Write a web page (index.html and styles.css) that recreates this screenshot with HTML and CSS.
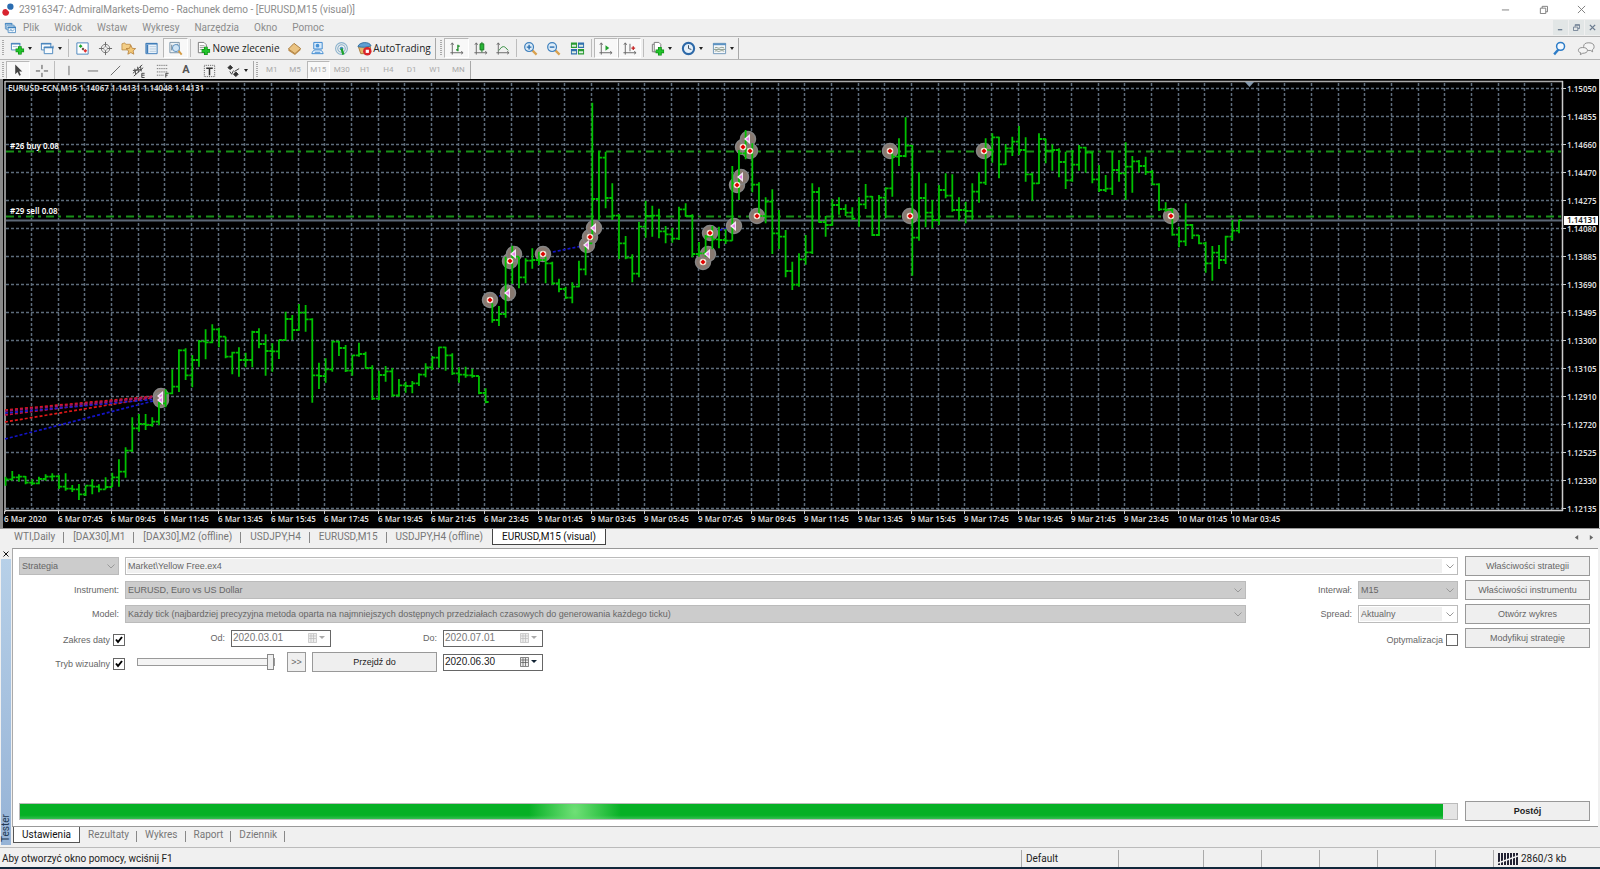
FILE: index.html
```html
<!DOCTYPE html>
<html lang="pl">
<head>
<meta charset="utf-8">
<title>AdmiralMarkets-Demo - EURUSD,M15</title>
<link rel="stylesheet" href="styles.css">
</head>
<body>
<div class="app">
  <header class="title-bar">
    <svg class="app-icon" viewBox="0 0 14 14"><circle cx="9" cy="4" r="3.4" fill="#2a6cb0"/><circle cx="4" cy="10" r="3.6" fill="#d8242f"/><path d="M5 6l3 3" stroke="#fff" stroke-width="1.2"/></svg>
    <span class="title-text">23916347: AdmiralMarkets-Demo - Rachunek demo - [EURUSD,M15 (visual)]</span>
    <div class="window-buttons">
      <button aria-label="Minimalizuj"><svg viewBox="0 0 10 10"><path d="M1 5.5h8"/></svg></button>
      <button aria-label="Przywróć"><svg viewBox="0 0 10 10"><path d="M1.5 3.5h6v6h-6zM3.5 3.5v-2h6v6h-2"/></svg></button>
      <button aria-label="Zamknij"><svg viewBox="0 0 10 10"><path d="M1 1l8 8M9 1l-8 8"/></svg></button>
    </div>
  </header>

  <nav class="menu-bar">
    <svg class="menu-icon" viewBox="0 0 13 13"><g fill="#f4f9fd" stroke="#5a93c4"><path d="M1.500 1.500h7v6h-7z"/><path d="M3 3.500h8v5h-8z"/><path d="M4.500 5.500h8v6h-8z"/></g><path d="M1 2h8M4 6h9" stroke="#3f83c0" stroke-width="1.500"/><path d="M6 10l1.500-2 1.500 2 2-2" fill="none" stroke="#5a93c4"/></svg>
    <a href="#">Plik</a><a href="#">Widok</a><a href="#">Wstaw</a><a href="#">Wykresy</a><a href="#">Narzędzia</a><a href="#">Okno</a><a href="#">Pomoc</a>
    <div class="mdi-buttons">
      <button aria-label="Minimalizuj wykres"><svg viewBox="0 0 8 8"><path d="M1 6.500h5" stroke-width="1.500"/></svg></button>
      <button aria-label="Przywróć wykres"><svg viewBox="0 0 8 8"><path d="M.5 3.500h5v4h-5zM2.500 3V.700h5v4.500h-2M2.500 1.500h5"/></svg></button>
      <button aria-label="Zamknij wykres"><svg viewBox="0 0 8 8"><path d="M1 1l6 6M7 1l-6 6" stroke-width="1.600"/></svg></button>
    </div>
  </nav>

  <div class="toolbar toolbar-main">
    <span class="grip"></span>
    <div class="group group-files">
      <button class="drop" aria-label="Nowy wykres"><svg viewBox="0 0 16 16"><path d="M1.500 2.500h9v7h-9z" fill="#fff" stroke="#4b86bd"/><path d="M1 3h10" stroke="#4b86bd" stroke-width="1.500"/><path d="M3 6h5" stroke="#9ab8d4"/><path d="M10.500 5.500v9M6 10h9" stroke="#0a8a12" stroke-width="4"/><path d="M10.500 6v8M6.500 10h8" stroke="#22c32b" stroke-width="2.400"/></svg></button>
      <button class="drop" aria-label="Profile"><svg viewBox="0 0 16 16"><g fill="#f6fafd" stroke="#4b86bd"><path d="M1.500 2.500h10v7h-10z"/><path d="M4.500 6.500h9v7h-9z"/></g><path d="M1 3h11M4 7h10" stroke="#4b86bd" stroke-width="1.500"/><path d="M14 5v3" stroke="#4b86bd"/></svg></button>
    </div>
    <span class="separator"></span>
    <div class="group group-five">
      <button aria-label="Rynek"><svg viewBox="0 0 16 16"><path d="M2 2h12v12H2z" fill="#fff" stroke="#4b86bd"/><path d="M4 5.500l2-2 2 2-2 2z" fill="#19a628"/><path d="M7 8.500l1.500-1.500L10 8.500 8.500 10z" fill="#5c3a2a"/><path d="M9 10.500l2-2 2 2-2 2z" fill="#e03030"/></svg></button>
      <button aria-label="Okno danych"><svg viewBox="0 0 16 16"><circle cx="8" cy="8" r="4.500" fill="none" stroke="#777"/><circle cx="8" cy="8" r="2" fill="none" stroke="#aaa"/><path d="M8 1v5M8 10v5M1 8h5M10 8h5" stroke="#666"/></svg></button>
      <button aria-label="Nawigator"><svg viewBox="0 0 16 16"><path d="M1 3l3-1 1 1.500h5v6H1z" fill="#f3ce87" stroke="#b8863e" stroke-width=".8"/><path d="M10.500 4.500l1.500 3.300 3.600.3-2.700 2.400.8 3.600-3.200-1.800-3.200 1.800.8-3.600L5.400 8.100 9 7.800z" fill="#f3c877" stroke="#b07a34" stroke-width=".8"/></svg></button>
      <button aria-label="Terminal"><svg viewBox="0 0 16 16"><path d="M2 2.500h12v11H2z" fill="#eaf3fb" stroke="#3d7bb7"/><path d="M2 3h12" stroke="#3d7bb7" stroke-width="1.500"/><path d="M3.500 4v9" stroke="#3d7bb7" stroke-width="2"/><path d="M6 6h7M6 8.500h7M6 11h7" stroke="#b6cbdd"/></svg></button>
      <button class="pressed" aria-label="Tester strategii"><svg viewBox="0 0 16 16"><path d="M2 1.500h10v11H2z" fill="#eef3f7" stroke="#7b93a8"/><path d="M4 4v6M6 5v4M10 3v3" stroke="#678"/><circle cx="8.500" cy="7.500" r="3.800" fill="#cfe4f5" stroke="#5b8fbe"/><path d="M11.300 10.500l3.300 4" stroke="#d59b42" stroke-width="2"/></svg></button>
    </div>
    <span class="separator"></span>
    <button class="text-button new-order"><svg viewBox="0 0 16 16"><path d="M2.500 1.500h6l2.500 2.500v8.500H2.500z" fill="#fff" stroke="#777"/><path d="M4 5h5M4 7h5M4 9h3" stroke="#999"/><path d="M10.500 6v9M6 10.500h9" stroke="#0a8a12" stroke-width="4"/><path d="M10.500 6.500v8M6.500 10.500h8" stroke="#22c32b" stroke-width="2.400"/></svg>Nowe zlecenie</button>
    <div class="group group-three">
      <button aria-label="MetaEditor"><svg viewBox="0 0 16 16"><path d="M1.500 8.500l6-6 7 5.500-6 5.500z" fill="#eac382" stroke="#a87a3b"/><path d="M1.500 8.500v2l7 4.500 6-5.500V8l-6 5.500z" fill="#bd8d4a"/></svg></button>
      <button aria-label="MQL5"><svg viewBox="0 0 16 16"><path d="M4 1.500h9v7H4z" fill="#d8eafa" stroke="#3a86cf"/><circle cx="8" cy="5" r="2" fill="#4792d6"/><path d="M2 13.500c1-4 3-4 6-4s5 0 6 4z" fill="#eaf4fd" stroke="#3a86cf"/><path d="M5 12h6" stroke="#3a86cf"/></svg></button>
      <button aria-label="Sygnały"><svg viewBox="0 0 16 16"><g fill="none" stroke="#8bb2cc" stroke-width="1.200"><circle cx="8" cy="8" r="6.300"/><circle cx="8" cy="8" r="4"/></g><circle cx="8" cy="8" r="2" fill="#4c91c2"/><path d="M8 8l2 6.500" stroke="#1da32a" stroke-width="2.400"/></svg></button>
    </div>
    <button class="text-button auto-trading"><svg viewBox="0 0 16 16"><path d="M1.500 6l6.500-2 6.500 2-1.500 7.500H4z" fill="#e5b56a" stroke="#a87a3b"/><path d="M1 6c1-5 12-6 14-1-4 2-9 2-14 1z" fill="#5e9fd4" stroke="#38709f"/><circle cx="11" cy="11" r="4.500" fill="#d9232a"/><path d="M9.300 9.300h3.400v3.400H9.300z" fill="#fff"/></svg>AutoTrading</button>
    <span class="edge"></span>
    <span class="grip"></span>
    <div class="group group-three">
      <button class="pressed" aria-label="Wykres słupkowy"><svg viewBox="0 0 16 16"><path d="M3.500 2v12.500M1.500 12.500h13M2 4l1.500-2L5 4M13 11l2 1.500-2 1.500" fill="none" stroke="#666"/><path d="M9.500 4v7M7.500 9.500h2M9.500 5.500h2" stroke="#1a8a25" stroke-width="1.400"/></svg></button>
      <button aria-label="Wykres świecowy"><svg viewBox="0 0 16 16"><path d="M3.500 2v12.500M1.500 12.500h13M2 4l1.500-2L5 4M13 11l2 1.500-2 1.500" fill="none" stroke="#666"/><path d="M9.500 1v11" stroke="#1a7a25"/><path d="M7.500 3h4v6.500h-4z" fill="#27b535" stroke="#147a1e"/></svg></button>
      <button aria-label="Wykres liniowy"><svg viewBox="0 0 16 16"><path d="M3.500 2v12.500M1.500 12.500h13M2 4l1.500-2L5 4M13 11l2 1.500-2 1.500" fill="none" stroke="#666"/><path d="M4 10c2-1 2-4 5-4 2 0 3 2 5 4" fill="none" stroke="#2d8a38"/></svg></button>
    </div>
    <span class="separator"></span>
    <div class="group group-three">
      <button aria-label="Powiększ"><svg viewBox="0 0 16 16"><path d="M10 10l4.500 4.500" stroke="#d9a14f" stroke-width="2.400"/><circle cx="6.500" cy="6.500" r="4.700" fill="#ddecf8" stroke="#3f80bd" stroke-width="1.300"/><path d="M4 6.500h5M6.500 4v5" stroke="#2b6fb0" stroke-width="1.500"/></svg></button>
      <button aria-label="Pomniejsz"><svg viewBox="0 0 16 16"><path d="M10 10l4.500 4.500" stroke="#d9a14f" stroke-width="2.400"/><circle cx="6.500" cy="6.500" r="4.700" fill="#ddecf8" stroke="#3f80bd" stroke-width="1.300"/><path d="M4 6.500h5" stroke="#2b6fb0" stroke-width="1.500"/></svg></button>
      <button aria-label="Sąsiadująco"><svg viewBox="0 0 16 16"><path d="M1 1.500h6.500v6H1zM8.500 8.500H15v6H8.500z" fill="#279a31"/><path d="M8.500 1.500H15v6H8.500zM1 8.500h6.500v6H1z" fill="#2f6fae"/><path d="M2 4h4.500v2H2zM9.500 4H14v2H9.500zM2 11h4.500v2H2zM9.500 11H14v2H9.500z" fill="#dfeee2"/></svg></button>
    </div>
    <span class="separator"></span>
    <div class="group group-two">
      <button class="pressed" aria-label="Autoprzewijanie"><svg viewBox="0 0 16 16"><path d="M3.500 2v12.500M1.500 12.500h13M2 4l1.500-2L5 4M13 11l2 1.500-2 1.500" fill="none" stroke="#666"/><path d="M8 4.500v6l4-3z" fill="#1fa02c"/></svg></button>
      <button class="pressed" aria-label="Przesunięcie wykresu"><svg viewBox="0 0 16 16"><path d="M3.500 2v12.500M1.500 12.500h13M2 4l1.500-2L5 4M13 11l2 1.500-2 1.500M8.500 3v8" fill="none" stroke="#666"/><path d="M10 7.500h4M12 5.500v4" stroke="#c42222" stroke-width="1.400"/></svg></button>
    </div>
    <span class="separator"></span>
    <div class="group group-insert">
      <button class="drop" aria-label="Wskaźniki"><svg viewBox="0 0 16 16"><path d="M2.500 3.500h6v8h-6z" fill="#fff" stroke="#777"/><path d="M4.500 1.500h5l2 2v8h-7z" fill="#fff" stroke="#777"/><path d="M10.500 6.500v9M6 11h9" stroke="#0a8a12" stroke-width="4"/><path d="M10.500 7v8M6.500 11h8" stroke="#22c32b" stroke-width="2.400"/></svg></button>
      <button class="drop" aria-label="Okresy"><svg viewBox="0 0 16 16"><circle cx="8" cy="8" r="6" fill="#e5f0fa" stroke="#2d69a8" stroke-width="2.200"/><path d="M8 4.500V8l3 1" fill="none" stroke="#345"/></svg></button>
      <button class="drop" aria-label="Szablony"><svg viewBox="0 0 16 16"><path d="M1.500 2.500h13v11h-13z" fill="#f5f8fb" stroke="#6f96b8"/><path d="M1 3.500h14" stroke="#5b92c2" stroke-width="2"/><path d="M3 7.500c2-2 3 1 5 0s3-1 5 0M3 11c2-2 3 1 5 0s3-1 5 0M2 9h12" fill="none" stroke="#8a9a8a"/></svg></button>
    </div>
    <span class="edge"></span>
    <div class="toolbar-right">
      <button aria-label="Szukaj"><svg viewBox="0 0 14 14"><path d="M6 8l-4 4.500" stroke="#2d7cc7" stroke-width="2.200"/><circle cx="8" cy="5" r="3.700" fill="#f3f9ff" stroke="#2d7cc7" stroke-width="1.400"/></svg></button>
      <button aria-label="Czat"><svg viewBox="0 0 20 14"><g fill="#f4f4f4" stroke="#8b8b8b"><path d="M12.500 1c3.500 0 5.500 1.500 5.500 4s-1 2.500-2 3.500l.5 2-2.500-1.500c-4 .5-7-1-7-4s2-4 5.500-4z"/><path d="M6 6c3 0 5 1 5 3s-2 3-5 3l-2.500 1.500.5-2C2 11 1.500 10 1.500 9c0-2 1.500-3 4.500-3z"/></g></svg></button>
    </div>
  </div>

  <div class="toolbar toolbar-lines">
    <span class="grip"></span>
    <div class="group group-cursor">
      <button class="pressed" aria-label="Kursor"><svg viewBox="0 0 16 16"><path d="M4.500 1.500v10.500l2.500-2.300 1.800 4 1.700-.8-1.800-3.800h3.300z" fill="#444"/></svg></button>
      <button aria-label="Celownik"><svg viewBox="0 0 16 16"><path d="M8.500 2v4.500M8.500 10.500V15M2 8.500h4.500M10.500 8.500H15" stroke="#444"/></svg></button>
    </div>
    <span class="separator"></span>
    <div class="group group-draw">
      <button aria-label="Linia pionowa"><svg viewBox="0 0 16 16"><path d="M8.500 3v10" stroke="#666"/></svg></button>
      <button aria-label="Linia pozioma"><svg viewBox="0 0 16 16"><path d="M3 8.500h11" stroke="#666"/></svg></button>
      <button aria-label="Linia trendu"><svg viewBox="0 0 16 16"><path d="M3 13L13 3" stroke="#666"/></svg></button>
      <button aria-label="Kanał"><svg viewBox="0 0 16 16"><path d="M2 11L12 2M3 14L13 5M4 6l1 6M7 4l1 6M10 3l1 6M2 8l9-1" stroke="#444"/><path d="M11.500 11h3M11.500 13h3M11.500 15.500h3M11.500 11v4.500" stroke="#444"/></svg></button>
      <button aria-label="Fibonacci"><svg viewBox="0 0 16 16"><path d="M2 2.500h12M2 6h12M2 9.500h12M2 13h7" stroke="#555" stroke-dasharray="1 1"/><path d="M11.500 15.500v-4.500h3M11.500 13h2" fill="none" stroke="#444"/></svg></button>
      <button class="glyph">A</button>
      <button aria-label="Etykieta"><svg viewBox="0 0 16 16"><path d="M2.500 2.500h11v12h-11z" fill="none" stroke="#555" stroke-dasharray="1 1"/><path d="M4.500 5.500h7M8 5.500V13" stroke="#333" stroke-width="1.600"/></svg></button>
    </div>
    <div class="group group-arrows"><button class="drop" aria-label="Strzałki"><svg viewBox="0 0 16 16"><path d="M2 5l2.500-2.500L7 5 4.500 7zM8 12l2.500-2.500L13 12l-2.500 2.500zM9 9l5-3" fill="#333" stroke="#333"/><path d="M4 9l2 3 2-4" fill="none" stroke="#444"/></svg></button></div>
    <span class="edge"></span>
    <span class="grip"></span>
    <div class="periods">
      <button>M1</button><button>M5</button><button class="pressed">M15</button><button>M30</button><button>H1</button><button>H4</button><button>D1</button><button>W1</button><button>MN</button>
    </div>
    <span class="edge"></span>
  </div>

  <main class="chart-area"><svg id="chart" class="chart" viewBox="0 79 1600 449" role="img" aria-label="Wykres EURUSD M15"></svg></main>

  <div class="chart-tabs">
    <button>WTI,Daily</button><button>[DAX30],M1</button><button>[DAX30],M2 (offline)</button><button>USDJPY,H4</button><button>EURUSD,M15</button><button>USDJPY,H4 (offline)</button><button class="active">EURUSD,M15 (visual)</button>
    <span class="tab-scroll"><button aria-label="W lewo"><svg viewBox="0 0 6 8"><path d="M5 1v6L1 4z"/></svg></button><button aria-label="W prawo"><svg viewBox="0 0 6 8"><path d="M1 1v6l4-3z"/></svg></button></span>
  </div>

  <section class="tester">
    <div class="tester-side">
      <button class="close" aria-label="Zamknij tester"><svg viewBox="0 0 6 6"><path d="M.5.5l5 5M5.500.5l-5 5"/></svg></button>
      <div class="strip"><span>Tester</span></div>
    </div>
    <div class="tester-body">
      <form class="form" onsubmit="return false">
        <div class="form-main">
          <div class="line">
            <select class="kind" aria-label="Typ"><option>Strategia</option></select>
            <select class="wide inset" aria-label="Program"><option>Market\Yellow Free.ex4</option></select>
          </div>
          <div class="line">
            <label class="caption" for="instrument">Instrument:</label>
            <select class="wide" id="instrument"><option>EURUSD, Euro vs US Dollar</option></select>
            <label class="caption" for="interval">Interwał:</label>
            <select class="small" id="interval"><option>M15</option></select>
          </div>
          <div class="line">
            <label class="caption" for="model">Model:</label>
            <select class="wide" id="model"><option>Każdy tick (najbardziej precyzyjna metoda oparta na najmniejszych dostępnych przedziałach czasowych do generowania każdego ticku)</option></select>
            <label class="caption" for="spread">Spread:</label>
            <select class="small inset" id="spread"><option>Aktualny</option></select>
          </div>
          <div class="line">
            <label class="check">Zakres daty <input type="checkbox" checked></label>
            <label class="caption from" for="from">Od:</label>
            <span class="date off"><input id="from" type="text" value="2020.03.01"><svg viewBox="0 0 20 12"><path d="M1.500 1.500h8v9h-8z"/><path d="M2 4h7M2 6.500h7M4 2v8M6.500 2v8" /><path class="tri" d="M12 4h6l-3 3z"/></svg></span>
            <label class="caption to" for="to">Do:</label>
            <span class="date off"><input id="to" type="text" value="2020.07.01"><svg viewBox="0 0 20 12"><path d="M1.500 1.500h8v9h-8z"/><path d="M2 4h7M2 6.500h7M4 2v8M6.500 2v8" /><path class="tri" d="M12 4h6l-3 3z"/></svg></span>
            <label class="check last">Optymalizacja <input type="checkbox"></label>
          </div>
          <div class="line">
            <label class="check">Tryb wizualny <input type="checkbox" checked></label>
            <input class="speed" type="range" min="0" max="100" value="100" aria-label="Szybkość">
            <button class="btn skip">&gt;&gt;</button>
            <button class="btn jump">Przejdź do</button>
            <span class="date"><input type="text" value="2020.06.30" aria-label="Przejdź do daty"><svg viewBox="0 0 20 12"><path d="M1.500 1.500h8v9h-8z"/><path d="M2 4h7M2 6.500h7M4 2v8M6.500 2v8" /><path class="tri" d="M12 4h6l-3 3z"/></svg></span>
          </div>
        </div>
        <div class="form-actions">
          <button class="btn muted">Właściwości strategii</button>
          <button class="btn muted">Właściwości instrumentu</button>
          <button class="btn muted">Otwórz wykres</button>
          <button class="btn muted">Modyfikuj strategię</button>
        </div>
      </form>
      <div class="run">
        <div class="progress" role="progressbar" aria-label="Postęp testu" aria-valuenow="99" aria-valuemin="0" aria-valuemax="100"><div class="progress-fill" style="width:99%"></div></div>
        <button class="btn stop">Postój</button>
      </div>
      <div class="tester-tabs">
        <button class="active">Ustawienia</button><button>Rezultaty</button><button>Wykres</button><button>Raport</button><button>Dziennik</button>
      </div>
    </div>
  </section>

  <footer class="status">
    <span class="help">Aby otworzyć okno pomocy, wciśnij F1</span>
    <span class="cell profile">Default</span>
    <span class="cell long"></span><span class="cell"></span><span class="cell"></span><span class="cell"></span><span class="cell"></span><span class="cell"></span>
    <span class="cell traffic"><svg viewBox="0 0 20 12"><path d="M1 0v12M4 0v12M7 0v12M10 0v12M13 0v12M16 0v12M19 0v12" stroke="#223" stroke-width="2"/><path d="M0 10L20 3" stroke="#efefef" stroke-width="1.500"/></svg>2860/3 kb</span>
  </footer>
</div>
<script src="chart.js"></script>
</body>
</html>
```
FILE: styles.css
```css
* { box-sizing: border-box; }
body { margin: 0; background: #f0f0f0; font-family: Roboto, "Open Sans", sans-serif; font-size: 10px; line-height: 14px; color: #222; }
button, select, input { font: inherit; color: inherit; margin: 0; }
button { border: 0; padding: 0; background: none; }
svg { display: block; flex: none; }
.app { min-height: 100vh; display: flex; flex-direction: column; border-bottom: 2px solid #12283c; }

.title-bar { display: flex; align-items: center; height: 19px; background: #fff; color: #8c8c8c; padding-left: 2px; }
.app-icon { width: 13px; height: 13px; margin-right: 4px; }
.window-buttons { margin-left: auto; display: flex; }
.window-buttons button { width: 38px; display: grid; place-items: center; }
.window-buttons svg { width: 9px; height: 9px; fill: none; stroke: #777; }

.menu-bar { display: flex; align-items: center; height: 18px; border-bottom: 1px solid #b4b4b4; padding-left: 4px; }
.menu-icon { width: 12px; height: 12px; margin-right: 7px; }
.menu-bar a { color: #8c8c8c; text-decoration: none; margin-right: 15px; }
.mdi-buttons { margin-left: auto; display: flex; gap: 1px; }
.mdi-buttons button { width: 15px; height: 15px; background: #e2e6e6; display: grid; place-items: center; }
.mdi-buttons svg { width: 7px; height: 7px; fill: none; stroke: #6b7c90; }

.toolbar { display: flex; align-items: center; height: 23px; border-bottom: 1px solid #b4b4b4; }
.toolbar-lines { height: 19px; border-bottom: 0; padding-top: 1px; }
.toolbar svg { width: 15px; height: 15px; }
.toolbar button { display: flex; align-items: center; justify-content: center; height: 20px; }
.toolbar-lines button { height: 18px; }
.grip { width: 2px; height: 16px; margin: 0 2px; background: repeating-linear-gradient(#aaa 0 1px, #f0f0f0 1px 2px); }
.separator { width: 1px; height: 18px; margin: 0 2px; background: #bdbdbd; }
.edge { width: 1px; height: 21px; background: #a8a8a8; margin-right: 2px; }
.toolbar-lines .edge { height: 18px; margin-right: 0; }
.group { display: flex; }
.group button { flex: 1; }
.drop::after { content: ""; border: 2px solid transparent; border-top: 3px solid #222; border-bottom: 0; margin-left: 3px; }
.pressed { border: 1px solid #b8b8b8; border-right-color: #fff; border-bottom-color: #fff; background: #f8f8f8; }
.group-files { width: 60px; }
.group-five { width: 117px; }
.group-three { width: 70px; }
.group-two { width: 47px; }
.group-insert { width: 92px; }
.text-button { gap: 1px; white-space: nowrap; font-family: "Open Sans", "Noto Sans", sans-serif; }
.new-order { width: 90px; }
.auto-trading { width: 82px; }
.toolbar-right { margin-left: auto; display: flex; gap: 10px; padding-right: 4px; }
.toolbar-right button:last-child svg { width: 19px; }
.group-cursor { width: 46px; }
.group-draw { width: 164px; }
.group-arrows { width: 32px; }
.toolbar .glyph { color: #555; font-weight: 700; font-size: 11px; }
.periods { display: grid; grid-template-columns: repeat(9, 1fr); width: 210px; font-size: 8px; color: #aaa; }

.chart-area { background: #000; }
.chart { width: 100%; height: auto; font-family: "Noto Sans", "Open Sans", sans-serif; font-size: 8px; font-weight: 600; fill: #ddd; }

.chart-tabs { display: flex; height: 17px; padding-left: 5px; border-top: 1px solid #999; color: #777; }
.chart-tabs > button { padding: 0 9px; background: linear-gradient(#888, #888) right 3px / 1px 11px no-repeat; white-space: nowrap; }
.chart-tabs > button:nth-child(6) { background: none; }
.chart-tabs > .active { background: #fff; border: 1px solid #444; border-top: 0; color: #111; }
.tab-scroll { margin-left: auto; display: flex; gap: 10px; align-items: center; padding-right: 6px; }
.tab-scroll svg { width: 5px; height: 7px; fill: #666; }

.tester { flex: 1; display: flex; padding-top: 3px; }
.tester-side { width: 12px; display: flex; flex-direction: column; }
.close { height: 11px; display: grid; place-items: center; }
.close svg { width: 6px; height: 6px; stroke: #111; fill: none; }
.strip { flex: 1; margin: 0 1px 2px; background: linear-gradient(#b7d0e8, #96b3d6); display: flex; align-items: flex-end; }
.strip span { writing-mode: vertical-rl; transform: rotate(180deg); line-height: 10px; padding-top: 3px; color: #223a55; }
.tester-body { flex: 1; min-width: 0; display: flex; flex-direction: column; border-left: 1px solid #aaa; border-top: 1px solid #999; background: #fff; margin-right: 2px; }
.form { display: flex; gap: 7px; padding: 7px 8px 0 6px; font-family: "Liberation Sans", Arial, sans-serif; font-size: 9px; color: #666; }
.form-main { flex: 1; min-width: 0; display: flex; flex-direction: column; gap: 6px; padding-top: 1px; }
.form-actions { width: 125px; display: flex; flex-direction: column; gap: 4px; }
.line { display: flex; gap: 6px; height: 18px; align-items: center; }
.caption { width: 100px; text-align: right; flex: none; }
select { appearance: none; height: 18px; border: 1px solid #bbb; border-radius: 0; padding: 0 2px; background: url("data:image/svg+xml,%3Csvg xmlns='http://www.w3.org/2000/svg' viewBox='0 0 8 5'%3E%3Cpath d='M.5.5L4 4 7.500.5' fill='none' stroke='%23999'/%3E%3C/svg%3E") right 3px center / 8px 5px no-repeat #ccc; }
.inset { background-image: url("data:image/svg+xml,%3Csvg xmlns='http://www.w3.org/2000/svg' viewBox='0 0 8 5'%3E%3Cpath d='M.5.5L4 4 7.500.5' fill='none' stroke='%23999'/%3E%3C/svg%3E"), linear-gradient(90deg, #f0f0f0 calc(100% - 15px), #fff 0); background-color: #fff; background-position: right 3px center, 0 0; background-size: 8px 5px, 100% 100%; box-shadow: inset 0 0 0 1px #fff; }
.kind, .small { width: 100px; }
.wide { flex: 1; min-width: 0; }
.check { width: 106px; flex: none; display: flex; justify-content: flex-end; align-items: center; gap: 3px; padding-top: 3px; }
.check input { appearance: none; width: 12px; height: 12px; border: 1px solid #666; background: #fff; }
.check input:checked { background: url("data:image/svg+xml,%3Csvg xmlns='http://www.w3.org/2000/svg' viewBox='0 0 10 10'%3E%3Cpath d='M2 4.500L4 7l4-5' fill='none' stroke='%23000' stroke-width='2'/%3E%3C/svg%3E") center / 10px 10px no-repeat #fff; }
.check.last { margin-left: auto; }
.caption.from { width: 94px; }
.caption.to { width: 100px; }
.date { width: 100px; height: 17px; display: flex; align-items: center; border: 1px solid #666; color: #222; font-size: 10px; }
.date input { flex: 1; min-width: 0; border: 0; padding: 0 1px; background: none; }
.date svg { width: 20px; height: 12px; margin-right: 3px; fill: #eee; stroke: #555; stroke-width: .7; }
.date .tri { fill: #123; stroke: none; }
.off { color: #777; }
.off svg { stroke: #bbb; }
.off .tri { fill: #aaa; }
.speed { appearance: none; width: 138px; height: 18px; margin: 0 6px; background: none; }
.speed::-webkit-slider-runnable-track { height: 8px; border: 1px solid #999; background: #f4f4f4; }
.speed::-webkit-slider-thumb { appearance: none; width: 7px; height: 16px; margin-top: -5px; border: 1px solid #888; background: #f0f0f0; }
.btn { height: 20px; border: 1px solid #999; background: #efefef; white-space: nowrap; }
.muted { color: #666; }
.skip { width: 19px; }
.jump { width: 125px; color: #222; }
.run { margin-top: auto; display: flex; align-items: center; gap: 7px; padding: 0 8px 5px 6px; font-family: "Liberation Sans", Arial, sans-serif; }
.progress { flex: 1; height: 17px; border: 1px solid #bbb; background: #e4e4e4; }
.progress-fill { height: 100%; background: radial-gradient(ellipse 46px 60px at 39% 50%, #70e077, rgba(112, 224, 119, 0)), linear-gradient(#06b025 75%, #35be50); }
.stop { width: 125px; font-weight: 700; font-size: 9px; }
.tester-tabs { display: flex; height: 21px; border-top: 1px solid #999; background: #f0f0f0; color: #777; margin-left: -1px; }
.tester-tabs button { height: 16px; padding: 0 8px; background: linear-gradient(#888, #888) right 4px / 1px 11px no-repeat; }
.tester-tabs .active { border: 1px solid #555; border-top: 0; background: #fff; color: #111; padding: 0 8px; margin-left: 1px; }

.status { display: flex; height: 20px; border-top: 1px solid #bbb; align-items: center; padding-top: 2px; }
.help { flex: 1; padding-left: 2px; }
.cell { width: 58px; height: 17px; border-left: 1px solid #aaa; padding-left: 4px; display: flex; align-items: center; gap: 3px; }
.profile { width: 97px; }
.long { width: 85px; }
.traffic { width: 107px; }
.traffic svg { width: 20px; height: 12px; }
```
FILE: chart.js
```js
const NS = "http://www.w3.org/2000/svg";
const svg = document.getElementById("chart");

function add(tag, attrs, text) {
  const el = document.createElementNS(NS, tag);
  for (const key in attrs) el.setAttribute(key, attrs[key]);
  if (text) el.textContent = text;
  svg.appendChild(el);
  return el;
}
function line(x1, y1, x2, y2, stroke, extra) {
  return add("line", Object.assign({ x1, y1, x2, y2, stroke }, extra));
}

add("rect", { x: 0, y: 79, width: 1600, height: 449, fill: "#000" });
add("rect", { x: 0, y: 79, width: 3, height: 449, fill: "#8a8a8a" });
line(1599.5, 79, 1599.5, 528, "#ddd");

// grid
const gridStyle = { "stroke-dasharray": "3 2", "stroke-width": 1.5 };
for (let k = 1; k < 59; k++) {
  const x = Math.round(5.33 + k * 26.667) - 0.5;
  if (x < 1562) line(x, 83, x, 511, "#5d6c7b", gridStyle);
}
const prices = "1.15050 1.14855 1.14660 1.14470 1.14275 1.14080 1.13885 1.13690 1.13495 1.13300 1.13105 1.12910 1.12720 1.12525 1.12330 1.12135".split(" ");
prices.forEach((price, k) => {
  const y = 88.5 + k * 28;
  line(6, y, 1562, y, "#5d6c7b", gridStyle);
  line(1563, y, 1566, y, "#ccc");
  add("text", { x: 1567, y: y + 3 }, price);
});

// frame and time axis
line(5, 81.5, 1563, 81.5, "#aaa", { "stroke-width": 1.5 });
line(5, 81, 5, 512, "#bbb", { "stroke-width": 1.5 });
line(1562.5, 81, 1562.5, 511, "#ccc", { "stroke-width": 1.5 });
line(5, 510.5, 1563, 510.5, "#ccc", { "stroke-width": 1.5 });
const pad = (n) => String(n).padStart(2, "0");
for (let k = 0; k <= 23; k++) {
  const hour = (5 + 2 * k) % 24;
  const day = k < 10 ? 6 : k < 22 ? 9 : 10;
  const x = Math.round(5.33 + k * 53.333);
  line(x - 0.5, 511, x - 0.5, 514, "#ccc");
  add("text", { x: x - 1, y: 522 }, k ? day + " Mar " + pad(hour) + ":45" : "6 Mar 2020");
}

// open orders and bid
for (const y of [151.5, 216.5]) {
  line(6, y, 1562, y, "#189018", { "stroke-width": 2, "stroke-dasharray": "8 4 3 5" });
}
line(6, 220.5, 1562, 220.5, "#5c6876", { "stroke-width": 2 });
add("rect", { x: 1564, y: 216, width: 34, height: 9, fill: "#fff" });
add("text", { x: 1567, y: 223, fill: "#222" }, "1.14131");
add("path", { d: "M1245 82h9l-4.500 5z", fill: "#8296aa" });

// history trades
const trades = [
  [5, 410, 157, 396, "#e01818"], [5, 415, 157, 396, "#c01040"], [5, 422, 157, 397, "#e01818"],
  [5, 413, 157, 399, "#2020d0"], [5, 439, 157, 400, "#1414c8"], [5, 411, 157, 397, "#9a1468"],
  [490, 300, 507, 293, "#1414c8"], [543, 254, 587, 245, "#1414c8"], [710, 233, 734, 226, "#1414c8"],
  [510, 261, 514, 254, "#1414c8"], [703, 262, 708, 254, "#1414c8"], [737, 185, 741, 177, "#1414c8"]
];
for (const [a, b, c, d, color] of trades) line(a, b, c, d, color, { "stroke-width": 1.7, "stroke-dasharray": "3 2" });

const markers = [
  [161, 396, "t"], [161, 400, "t"], [490, 300], [508, 293, "t"], [510, 261], [514, 254, "t"], [543, 254], [587, 245, "t"],
  [590, 237], [594, 228, "t"], [703, 262], [708, 254, "t"], [710, 233], [734, 226, "t"], [737, 185], [741, 177, "t"],
  [743, 147], [748, 139, "t"], [750, 151], [757, 216], [890, 151], [910, 216], [984, 151], [1171, 216]
];
for (const [x, y] of markers) add("circle", { cx: x, cy: y, r: 7.5, fill: "#887970", stroke: "#858585", "stroke-width": 1.5 });

// bars: "high,low,close" in thirds of a unit below the segment's top
const segments = [
  { first: 0, top: 280, bars: "590,617,598 573,602,592 583,605,590 588,613,608 598,615,610 590,613,597 583,602,590 580,602,589 585,627,620 580,632,626 615,636,628 612,660,643 617,648,617 598,643,620 613,637,628 592,628,621 578,620,592 538,620,575 502,593,512 412,516,445 402,455,432 402,450,435 412,440,425 365,436,370 328,382,340 268,343,320 208,336,211 205,300,286 225,322,240 180,260,184 148,238,187 133,190,148 143,202,170 170,235,230 215,283,218 202,290,240 218,262,240 152,262,156 145,205,192 163,287,213 190,275,214 180,237,180 95,182,117 105,180,150 72,152,98 75,155,118 115,368,286 248,327,288 235,308,268 182,275,185 182,228,204 195,276,272 225,287,226 188,230,222 215,266,264 256,360,356 272,360,285 258,305,274 264,350,346 297,350,316 305,338,318 303,340,310 280,318,284 250,292,262 228,270,233 200,263,202 200,272,226 220,285,280 262,308,284 260,293,286 266,293,288 288,343,339 325,370,366" },
  { first: 73, top: 90, bars: "640,698,690 648,708,672 500,683,510 467,582,500 500,595,562 505,580,512 475,536,510 485,525,510 500,580,520 515,585,580 566,607,597 590,627,623 577,640,590 512,592,538 460,556,460 38,450,327 182,390,203 185,355,324 280,390,377 372,507,460 438,508,503 493,577,551 395,562,410 332,443,378 347,440,377 356,445,424 408,460,433 413,458,446 350,450,358 340,380,378 373,502,492 456,500,490 435,500,440 408,478,448 410,475,450 418,462,452 228,452,280 180,330,190 120,208,180 160,307,284 277,383,378 322,400,335 298,492,430 360,477,440 420,562,543 515,600,584 490,590,508 435,524,487 280,492,306 292,398,396 378,440,405 328,407,345 322,374,357 343,378,368 352,390,386" },
  { first: 128, top: 110, bars: "262,350,283 222,297,260 258,378,375 255,378,263 232,325,235 130,260,140 85,168,138 22,142,107 105,497,383 187,392,264 220,352,308 270,355,330 225,345,240 190,265,257 193,305,300 262,332,300 275,340,303 220,330,245 187,278,218 85,225,120 70,158,82 80,205,163 102,165,115 80,138,95 48,135,120 82,215,193 188,272,220 70,222,87 86,160,122 103,182,120 115,202,156 125,237,211 120,215,164 105,182,113 110,188,128 125,220,208 165,246,240 195,246,236 125,255,180 150,215,190 97,270,170 138,248,154 150,188,168 140,195,186 180,225,223 220,303,298 277,305,300 295,377,374 350,412,394 280,408,345 342,387,376 375,403,400 395,488,460 408,512,428 405,477,450 377,462,380 330,392,362 330,370,330" }
];
let path = "";
for (const seg of segments) {
  let open = null;
  seg.bars.split(" ").forEach((bar, n) => {
    const [high, low, close] = bar.split(",").map((v) => seg.top + v / 3);
    const x = 5.6 + (seg.first + n) * 6.667;
    path += `M${x} ${high}V${low}M${x} ${close}h3`;
    if (open !== null) path += `M${x} ${open}h-3`;
    open = close;
  });
}
add("path", { d: path, fill: "none", stroke: "#00c000", "stroke-width": 1.8 });

for (const [x, y, kind] of markers) {
  if (kind) {
    add("path", { d: `M${x - 4} ${y}l6-5v10z`, fill: "#f4e4f4" });
    add("path", { d: `M${x - 2} ${y}l3-2v4z`, fill: "#e882e8" });
  } else {
    add("circle", { cx: x, cy: y, r: 3.3, fill: "#f4e8d8" });
    add("path", { d: `M${x - 2.5} ${y}l2.500-2.500 2.500 2.500-2.500 2.500z`, fill: "#e00000" });
  }
}

add("text", { x: 8, y: 91 }, "EURUSD-ECN,M15 1.14067 1.14131 1.14048 1.14131");
add("text", { x: 10, y: 149, fill: "#fff" }, "#26 buy 0.08");
add("text", { x: 10, y: 214, fill: "#fff" }, "#29 sell 0.08");
```
